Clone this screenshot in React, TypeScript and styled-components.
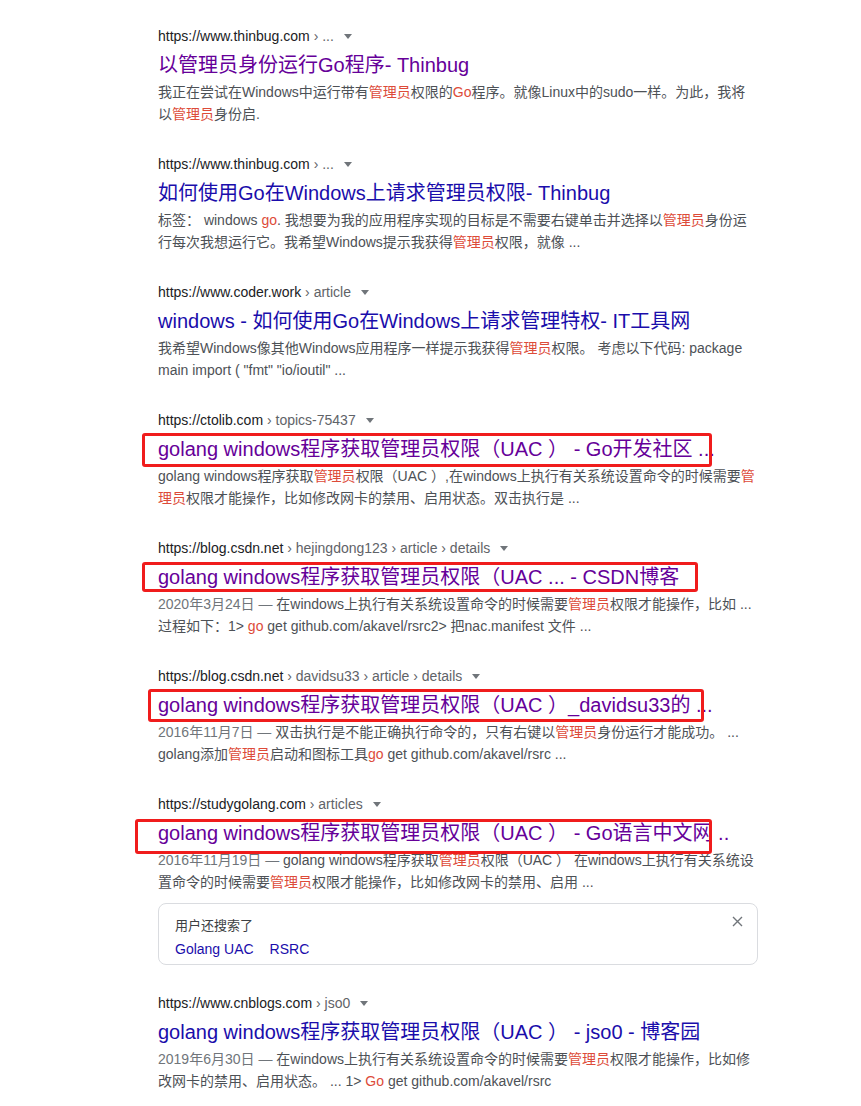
import React from 'react'
import styled, { createGlobalStyle } from 'styled-components'

const GlobalStyle = createGlobalStyle`
	html, body {
		margin: 0;
		padding: 0;
		background: #fff;
	}
	body {
		font-family: Arial, 'Liberation Sans', 'Noto Sans CJK SC', sans-serif;
	}
`

const Page = styled.div`
	padding: 25px 0 0 158px;
	width: 600px;
	display: flex;
	flex-direction: column;
`
const Result = styled.div`
	margin-bottom: 28px;
`
const UrlLine = styled.div`
	display: flex;
	align-items: center;
	height: 22px;
	font-size: 14px;
	line-height: 22px;
	color: #202124;
	white-space: nowrap;
`
const Crumbs = styled.span`
	color: #5f6368;
`
const DropArrow = styled.span`
	margin-left: 10px;
	width: 0;
	height: 0;
	border-left: 4px solid transparent;
	border-right: 4px solid transparent;
	border-top: 5px solid #70757a;
`
const TitleWrap = styled.div`
	position: relative;
	padding-top: 5px;
	margin-bottom: 3px;
`
const Title = styled.h3<{ $visited?: boolean }>`
	margin: 0;
	font-size: 20px;
	font-weight: normal;
	line-height: 26px;
	white-space: nowrap;
	color: ${p => (p.$visited ? '#660099' : '#1a0dab')};
	cursor: pointer;
`
const Mark = styled.div`
	position: absolute;
	border: 3px solid #f01c1c;
	border-radius: 3px;
	box-sizing: border-box;
	pointer-events: none;
`
const Snippet = styled.div`
	font-size: 14px;
	line-height: 22px;
	color: #4d5156;
`
const Line = styled.div`
	white-space: nowrap;
`
const Em = styled.span`
	color: #dd4b39;
`
const DateText = styled.span`
	color: #70757a;
`
const Card = styled.div`
	position: relative;
	margin: -18px 0 27px;
	padding: 12px 16px 5px;
	border: 1px solid #dadce0;
	border-radius: 8px;
`
const CardHead = styled.div`
	font-size: 13px;
	line-height: 20px;
	color: #3c4043;
	margin-bottom: 3px;
`
const CardLinks = styled.div`
	display: flex;
	gap: 16px;
	font-size: 14px;
	line-height: 20px;
`
const CardLink = styled.a`
	color: #1a0dab;
	text-decoration: none;
`
const CloseBtn = styled.button`
	position: absolute;
	top: 12px;
	right: 14px;
	padding: 0;
	border: none;
	background: none;
	display: flex;
	cursor: pointer;
`

type MarkBox = { l: number; t: number; w: number; h: number }

type Item = {
	url: string
	crumbs: string
	title: string
	visited?: boolean
	date?: string
	snippet: string
	mark?: MarkBox
}

const results: Item[] = [
	{
		url: 'https://www.thinbug.com',
		crumbs: '...',
		title: '以管理员身份运行Go程序- Thinbug',
		visited: true,
		snippet: '我正在尝试在Windows中运行带有[管理员]权限的[Go]程序。就像Linux中的sudo一样。为此，我将\n以[管理员]身份启.',
	},
	{
		url: 'https://www.thinbug.com',
		crumbs: '...',
		title: '如何使用Go在Windows上请求管理员权限- Thinbug',
		snippet: '标签： windows [go]. 我想要为我的应用程序实现的目标是不需要右键单击并选择以[管理员]身份运\n行每次我想运行它。我希望Windows提示我获得[管理员]权限，就像 ...',
	},
	{
		url: 'https://www.coder.work',
		crumbs: 'article',
		title: 'windows - 如何使用Go在Windows上请求管理特权- IT工具网',
		snippet: '我希望Windows像其他Windows应用程序一样提示我获得[管理员]权限。 考虑以下代码: package\nmain import ( "fmt" "io/ioutil" ...',
	},
	{
		url: 'https://ctolib.com',
		crumbs: 'topics-75437',
		title: 'golang windows程序获取管理员权限（UAC ） - Go开发社区 ...',
		visited: true,
		snippet: 'golang windows程序获取[管理员]权限（UAC ）,在windows上执行有关系统设置命令的时候需要[管]\n[理员]权限才能操作，比如修改网卡的禁用、启用状态。双击执行是 ...',
		mark: { l: -16, t: -3, w: 570, h: 34 },
	},
	{
		url: 'https://blog.csdn.net',
		crumbs: 'hejingdong123 › article › details',
		title: 'golang windows程序获取管理员权限（UAC ... - CSDN博客',
		visited: true,
		date: '2020年3月24日',
		snippet: '在windows上执行有关系统设置命令的时候需要[管理员]权限才能操作，比如 ...\n过程如下：1> [go] get github.com/akavel/rsrc2> 把nac.manifest 文件 ...',
		mark: { l: -16, t: -2, w: 556, h: 30 },
	},
	{
		url: 'https://blog.csdn.net',
		crumbs: 'davidsu33 › article › details',
		title: 'golang windows程序获取管理员权限（UAC ）_davidsu33的 ...',
		visited: true,
		date: '2016年11月7日',
		snippet: '双击执行是不能正确执行命令的，只有右键以[管理员]身份运行才能成功。 ...\ngolang添加[管理员]启动和图标工具[go] get github.com/akavel/rsrc ...',
		mark: { l: -10, t: -3, w: 556, h: 33 },
	},
	{
		url: 'https://studygolang.com',
		crumbs: 'articles',
		title: 'golang windows程序获取管理员权限（UAC ） - Go语言中文网 ..',
		visited: true,
		date: '2016年11月19日',
		snippet: 'golang windows程序获取[管理员]权限（UAC ） 在windows上执行有关系统设\n置命令的时候需要[管理员]权限才能操作，比如修改网卡的禁用、启用 ...',
		mark: { l: -23, t: -1, w: 577, h: 35 },
	},
]

const lastResult: Item = {
	url: 'https://www.cnblogs.com',
	crumbs: 'jso0',
	title: 'golang windows程序获取管理员权限（UAC ） - jso0 - 博客园',
	date: '2019年6月30日',
	snippet: '在windows上执行有关系统设置命令的时候需要[管理员]权限才能操作，比如修\n改网卡的禁用、启用状态。 ... 1> [Go] get github.com/akavel/rsrc',
}

// "[...]" marks the words google highlights, "\n" a line break
const renderLine = (text: string) =>
	text.split(/(\[[^\]]*\])/).map((part, i) =>
		part.startsWith('[') ? <Em key={i}>{part.slice(1, -1)}</Em> : part
	)

const SearchResult: React.FC<{ item: Item }> = ({ item }) => {
	const lines = item.snippet.split('\n')
	return (
		<Result>
			<UrlLine>
				{item.url}
				<Crumbs>&nbsp;› {item.crumbs}</Crumbs>
				<DropArrow />
			</UrlLine>
			<TitleWrap>
				<Title $visited={item.visited}>{item.title}</Title>
				{item.mark && (
					<Mark
						style={{
							left: item.mark.l,
							top: 5 + item.mark.t,
							width: item.mark.w,
							height: item.mark.h,
						}}
					/>
				)}
			</TitleWrap>
			<Snippet>
				{lines.map((line, i) => (
					<Line key={i}>
						{i === 0 && item.date && <DateText>{item.date} — </DateText>}
						{renderLine(line)}
					</Line>
				))}
			</Snippet>
		</Result>
	)
}

const App: React.FC = () => {
	return (
		<>
			<GlobalStyle />
			<Page>
				{results.map((r, i) => (
					<SearchResult key={i} item={r} />
				))}
				<Card>
					<CardHead>用户还搜索了</CardHead>
					<CardLinks>
						<CardLink href="#">Golang UAC</CardLink>
						<CardLink href="#">RSRC</CardLink>
					</CardLinks>
					<CloseBtn aria-label="关闭">
						<svg width="11" height="11" viewBox="0 0 11 11">
							<path d="M1 1L10 10M10 1L1 10" stroke="#70757a" strokeWidth="1.4" />
						</svg>
					</CloseBtn>
				</Card>
				<SearchResult item={lastResult} />
			</Page>
		</>
	)
}

export default App
